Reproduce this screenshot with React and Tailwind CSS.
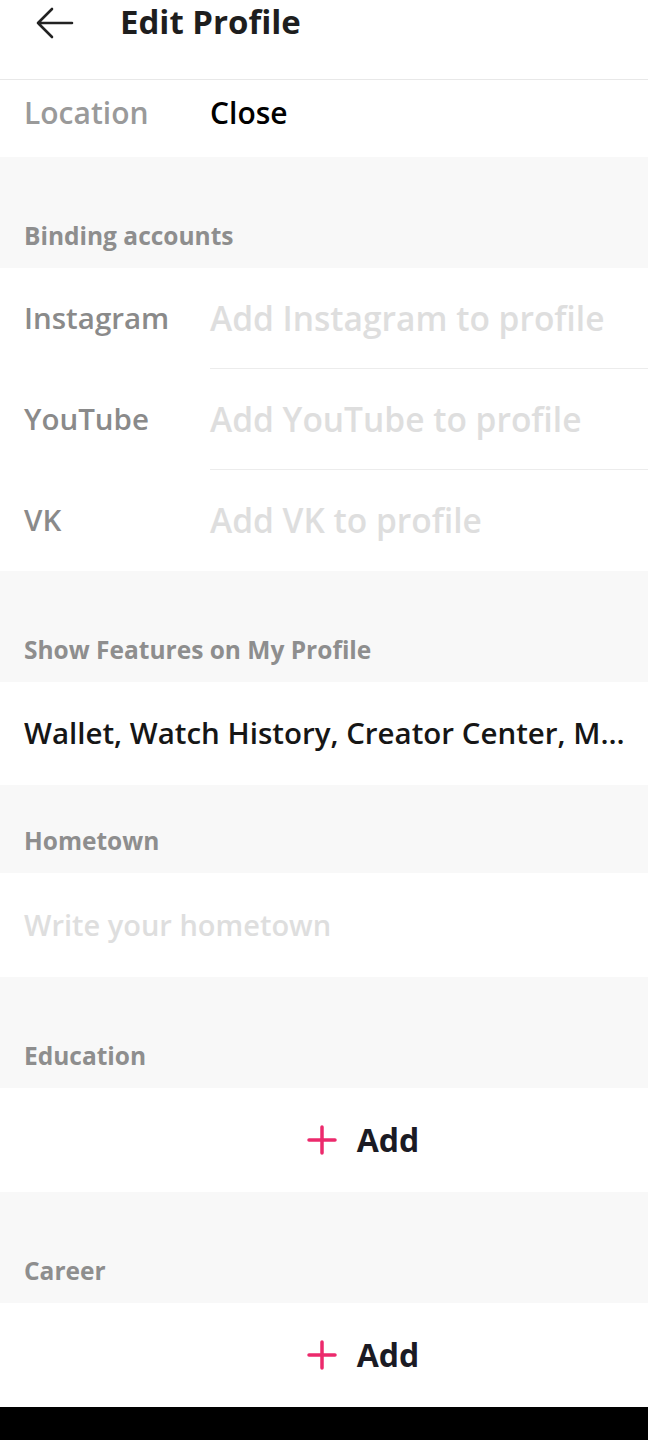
import React from "react";

const font = { fontFamily: "'Open Sans', 'Noto Sans', sans-serif" };

function SectionHeader({ children, h = "h-[111px]" }) {
  return (
    <div className={`${h} shrink-0 bg-[#f8f8f8] flex items-end px-6 pb-[20px]`}>
      <span className="text-[24.5px] font-bold text-[#8e8e8e] leading-none">{children}</span>
    </div>
  );
}

function AccountRow({ label, placeholder, divider }) {
  return (
    <div className="h-[101px] shrink-0 flex">
      <div className="w-[210px] shrink-0 pl-6 flex items-center">
        <span className="text-[29.5px] font-semibold text-[#8a8a8a]">{label}</span>
      </div>
      <div className={`flex-1 flex items-center ${divider ? "border-b border-[#ececec]" : ""}`}>
        <span className="text-[33.5px] font-semibold text-[#dedede]">{placeholder}</span>
      </div>
    </div>
  );
}

function AddRow() {
  return (
    <div className="h-[104px] shrink-0 bg-white flex items-center justify-center gap-5 pl-[78px]">
      <svg width="30" height="30" viewBox="0 0 30 30">
        <path d="M15 2v26M2 15h26" stroke="#ec2a6c" strokeWidth="3.5" strokeLinecap="round" />
      </svg>
      <span className="text-[32px] font-bold text-[#1b1b24]">Add</span>
    </div>
  );
}

export default function App() {
  return (
    <div className="w-[648px] h-[1440px] bg-white flex flex-col overflow-hidden" style={font}>
      <div className="h-[80px] shrink-0 border-b border-[#e8e8e8] flex items-start">
        <div className="w-[120px] pl-[34px] pt-[6px]">
          <svg width="40" height="34" viewBox="0 0 40 34" fill="none">
            <path d="M38 17H4M18 3L4 17l14 14" stroke="#222" strokeWidth="2.6" strokeLinecap="round" strokeLinejoin="round" />
          </svg>
        </div>
        <span className="text-[33px] font-bold text-[#1e1e1e] leading-none mt-[5px]">Edit Profile</span>
      </div>
      <div className="h-[77px] shrink-0 flex items-start pt-[10px]">
        <span className="w-[210px] pl-6 text-[30px] font-semibold text-[#9a9a9a]">Location</span>
        <span className="text-[30px] font-semibold text-black">Close</span>
      </div>
      <SectionHeader>Binding accounts</SectionHeader>
      <AccountRow label="Instagram" placeholder="Add Instagram to profile" divider />
      <AccountRow label="YouTube" placeholder="Add YouTube to profile" divider />
      <AccountRow label="VK" placeholder="Add VK to profile" />
      <SectionHeader>Show Features on My Profile</SectionHeader>
      <div className="h-[103px] shrink-0 flex items-center px-6">
        <span className="whitespace-nowrap text-[29.5px] font-semibold text-[#161616]">
          Wallet, Watch History, Creator Center, M…
        </span>
      </div>
      <SectionHeader h="h-[88px]">Hometown</SectionHeader>
      <div className="h-[104px] shrink-0 flex items-center px-6">
        <span className="text-[29px] font-semibold text-[#dedede]">Write your hometown</span>
      </div>
      <SectionHeader>Education</SectionHeader>
      <AddRow />
      <SectionHeader>Career</SectionHeader>
      <AddRow />
      <div className="flex-1 bg-black" />
    </div>
  );
}
